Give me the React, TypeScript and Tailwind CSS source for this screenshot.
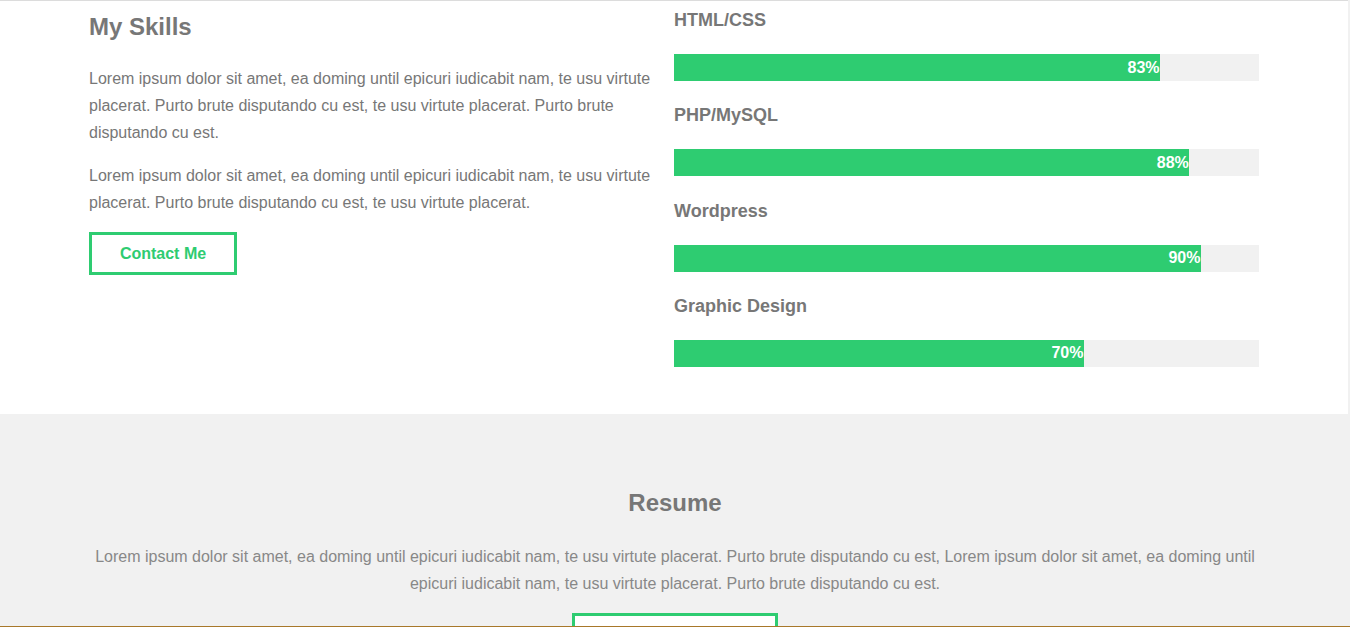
import React from "react";

type Skill = {
  name: string;
  value: number;
};

const skills: Skill[] = [
  { name: "HTML/CSS", value: 83 },
  { name: "PHP/MySQL", value: 88 },
  { name: "Wordpress", value: 90 },
  { name: "Graphic Design", value: 70 },
];

const lorem =
  "Lorem ipsum dolor sit amet, ea doming until epicuri iudicabit nam, te usu virtute placerat. Purto brute disputando cu est, te usu virtute placerat. Purto brute disputando cu est.";

function SkillBar({ name, value }: Skill) {
  return (
    <div>
      <h3 className="mb-[16px] h-[37px] pt-[2px] text-[18px] font-bold leading-[35px] text-[#777]">{name}</h3>
      <div className="h-[27px] bg-[#f1f1f1]">
        <div
          className="flex h-full items-center justify-end bg-[#2ecc71] text-[16px] font-bold text-white"
          style={{ width: `${value}%` }}
        >
          {value}%
        </div>
      </div>
    </div>
  );
}

export default function App() {
  return (
    <div className="min-h-[627px] bg-[#f1f1f1] font-['Liberation_Sans',Arial,sans-serif] text-[#777]">
      <section className="mr-[2px] border-t border-[#dcdcdc] bg-white pb-[47px]">
        <div className="mx-auto grid w-[1170px] grid-cols-[570px_585px] gap-[15px]">
          <div>
            <h2 className="mt-[9px] text-[24px] font-bold leading-[34px]">My Skills</h2>
            <p className="mt-[21px] text-[16px] leading-[27px]">{lorem}</p>
            <p className="mt-[16px] text-[16px] leading-[27px]">
              Lorem ipsum dolor sit amet, ea doming until epicuri iudicabit nam, te usu virtute placerat. Purto
              brute disputando cu est, te usu virtute placerat.
            </p>
            <button className="mt-[16px] h-[43px] w-[148px] border-[3px] border-[#2ecc71] text-[16px] font-bold text-[#2ecc71]">
              Contact Me
            </button>
          </div>
          <div className="flex flex-col gap-[15.3px]">
            {skills.map((skill) => (
              <SkillBar key={skill.name} name={skill.name} value={skill.value} />
            ))}
          </div>
        </div>
      </section>

      <section className="bg-[#f1f1f1] pt-[72px] text-center">
        <h2 className="text-[24px] font-bold leading-[34px]">Resume</h2>
        <p className="mx-auto mt-[23px] w-[1170px] text-[16px] leading-[27px] text-[#888]">
          Lorem ipsum dolor sit amet, ea doming until epicuri iudicabit nam, te usu virtute placerat. Purto brute
          disputando cu est, Lorem ipsum dolor sit amet, ea doming until epicuri iudicabit nam, te usu virtute
          placerat. Purto brute disputando cu est.
        </p>
        <button className="mt-[16px] h-[43px] w-[206px] border-[3px] border-[#2ecc71] bg-white text-[16px] font-bold text-[#2ecc71]">
          Download CV
        </button>
      </section>
      <div className="h-[200px] bg-[#a8782a]" />
      <div className="fixed inset-x-0 bottom-0 h-px bg-[#a8782a]" />
    </div>
  );
}
